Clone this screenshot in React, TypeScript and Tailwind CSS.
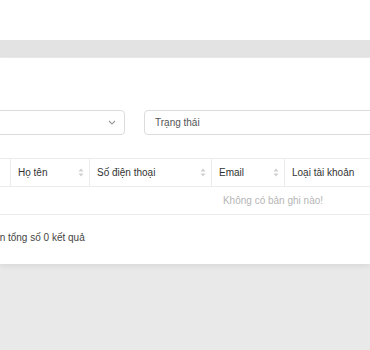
const font = { fontFamily: '"Liberation Sans", Arial, sans-serif' };

function SortIcon() {
  return (
    <svg width="6" height="9" viewBox="0 0 6 9" className="shrink-0">
      <path d="M3 0.5 L5.5 3.5 H0.5 Z" fill="#cfcfcf" />
      <path d="M3 8.5 L5.5 5.5 H0.5 Z" fill="#cfcfcf" />
    </svg>
  );
}

function Chevron() {
  return (
    <svg width="8" height="5" viewBox="0 0 8 5" className="shrink-0">
      <path d="M1 1 L4 4 L7 1" fill="none" stroke="#9a9a9a" strokeWidth="1.1" />
    </svg>
  );
}

const cols = [
  { label: "Họ tên", w: "w-[79px]", sort: true },
  { label: "Số điện thoại", w: "w-[122px]", sort: true },
  { label: "Email", w: "w-[73px]", sort: true },
  { label: "Loại tài khoản", w: "w-[140px]", sort: false },
];

export default function App() {
  return (
    <div className="w-[370px] h-[350px] bg-[#e9e9e9] overflow-hidden" style={font}>
      {/* top bar */}
      <div className="h-[40px] bg-white" />
      <div className="h-[18px] bg-[#e3e3e3] border-b border-[#ececec]" />

      {/* card */}
      <div className="h-[206px] bg-white shadow-[0_2px_6px_rgba(0,0,0,0.08)] pt-[52px]">
        {/* filters */}
        <div className="flex gap-[19px] ml-[-75px]">
          <div className="w-[200px] shrink-0 h-[25px] border border-[#dcdcdc] rounded-[4px] flex items-center justify-end pr-[8px]">
            <Chevron />
          </div>
          <div className="w-[260px] shrink-0 h-[25px] border border-[#dcdcdc] rounded-[4px] flex items-center pl-[10px] text-[10px] text-[#555]">
            Trạng thái
          </div>
        </div>

        {/* table */}
        <div className="mt-[23px] ml-[-100px] w-[746px]">
          <div className="flex h-[29px] border-y border-[#ececec] text-[10px] text-[#333]">
            <div className="w-[111px] shrink-0 border-r border-[#ececec]" />
            {cols.map((c) => (
              <div
                key={c.label}
                className={`${c.w} shrink-0 flex items-center justify-between pl-[7px] pr-[5px] border-r border-[#ececec]`}
              >
                <span>{c.label}</span>
                {c.sort && <SortIcon />}
              </div>
            ))}
          </div>
          <div className="h-[28px] border-b border-[#ececec] flex items-center justify-center text-[10px] text-[#b5b5b5]">
            Không có bản ghi nào!
          </div>
        </div>

        {/* footer */}
        <div className="mt-[15px] ml-[-15px] text-[10px] text-[#444]">Trên tổng số 0 kết quả</div>
      </div>
    </div>
  );
}
